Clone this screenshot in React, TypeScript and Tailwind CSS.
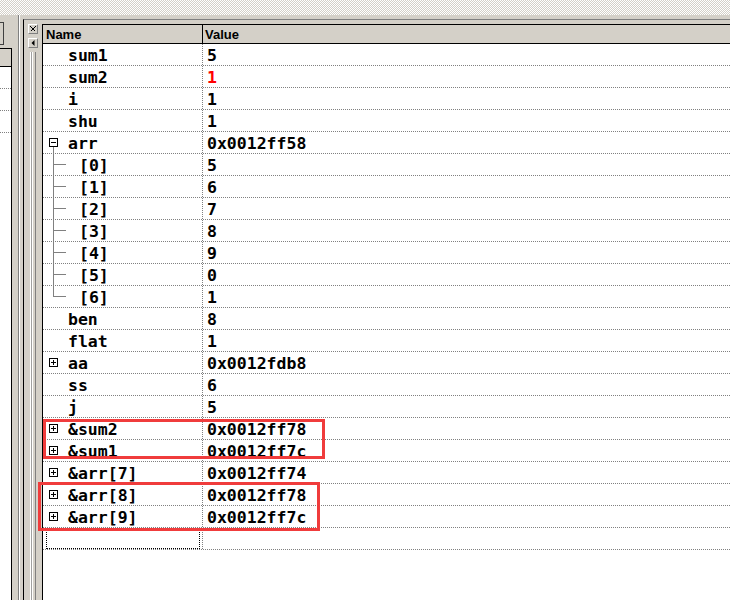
import React from "react";

type Kind = "none" | "plus" | "minus" | "child" | "last";
type Row = { name: string; value: string; kind: Kind; red?: boolean };

const rows: Row[] = [
  { name: "sum1", value: "5", kind: "none" },
  { name: "sum2", value: "1", kind: "none", red: true },
  { name: "i", value: "1", kind: "none" },
  { name: "shu", value: "1", kind: "none" },
  { name: "arr", value: "0x0012ff58", kind: "minus" },
  { name: "[0]", value: "5", kind: "child" },
  { name: "[1]", value: "6", kind: "child" },
  { name: "[2]", value: "7", kind: "child" },
  { name: "[3]", value: "8", kind: "child" },
  { name: "[4]", value: "9", kind: "child" },
  { name: "[5]", value: "0", kind: "child" },
  { name: "[6]", value: "1", kind: "last" },
  { name: "ben", value: "8", kind: "none" },
  { name: "flat", value: "1", kind: "none" },
  { name: "aa", value: "0x0012fdb8", kind: "plus" },
  { name: "ss", value: "6", kind: "none" },
  { name: "j", value: "5", kind: "none" },
  { name: "&sum2", value: "0x0012ff78", kind: "plus" },
  { name: "&sum1", value: "0x0012ff7c", kind: "plus" },
  { name: "&arr[7]", value: "0x0012ff74", kind: "plus" },
  { name: "&arr[8]", value: "0x0012ff78", kind: "plus" },
  { name: "&arr[9]", value: "0x0012ff7c", kind: "plus" },
];

const mono = "font-['DejaVu_Sans_Mono',monospace] font-bold text-[16.5px] leading-none text-black pt-[4px]";

function Lead({ kind }: { kind: Kind }) {
  return (
    <svg width="25" height="21" className="shrink-0 overflow-visible" shapeRendering="crispEdges">
      {(kind === "plus" || kind === "minus") && (
        <>
          <rect x="6.5" y="6.5" width="8" height="8" fill="#fff" stroke="#000" />
          <path d="M8 10.5h5" stroke="#000" />
          {kind === "plus" && <path d="M10.5 8v5" stroke="#000" />}
          {kind === "minus" && <path d="M10.5 15v7" stroke="#808080" />}
        </>
      )}
      {kind === "child" && (
        <path d="M10.5 0v22M10.5 10.5H23" stroke="#808080" fill="none" />
      )}
      {kind === "last" && (
        <path d="M10.5 0v10.5H23" stroke="#808080" fill="none" />
      )}
    </svg>
  );
}

function DataRow({ row }: { row: Row }) {
  const child = row.kind === "child" || row.kind === "last";
  return (
    <div className="flex h-[22px] shrink-0 border-b border-dotted border-[#808080]">
      <div className="flex w-[160px] shrink-0 items-center border-r border-dotted border-[#808080]">
        <Lead kind={row.kind} />
        <span className={`${mono} ${child ? "pl-[11px]" : ""} whitespace-pre`}>{row.name}</span>
      </div>
      <div className={`flex flex-1 items-center pl-[4px] ${mono} ${row.red ? "!text-[#ff0000]" : ""}`}>
        {row.value}
      </div>
    </div>
  );
}

function SmallButton({ children }: { children: React.ReactNode }) {
  return (
    <div className="flex h-[10px] w-[10px] items-center justify-center border-t border-l border-white border-r border-b border-r-[#808080] border-b-[#808080] bg-[#d4d0c8]">
      {children}
    </div>
  );
}

export default function App() {
  return (
    <div className="relative flex h-[600px] w-[730px] flex-col overflow-hidden bg-[#d4d0c8]">
      {/* hatched top strip */}
      <div className="h-[15px] shrink-0 [background-image:repeating-conic-gradient(#d4d0c8_0_25%,#ffffff_0_50%)] [background-size:2px_2px]" />

      <div className="flex min-h-0 flex-1">
        {/* left (variables) window edge */}
        <div className="flex w-[12px] shrink-0 flex-col">
          <div className="h-[33px] shrink-0 pt-[7px]">
            <div className="h-[23px] w-[4px] border-y border-r border-[#404040] bg-[#d4d0c8]" />
          </div>
          <div className="flex flex-1 flex-col border-t border-r border-black bg-white">
            <div className="h-[18px] shrink-0 border-b border-black bg-[#d4d0c8]" />
            <div className="h-[22px] shrink-0 border-b border-dotted border-[#808080]" />
            <div className="h-[22px] shrink-0 border-b border-dotted border-[#808080]" />
            <div className="h-[22px] shrink-0 border-b border-dotted border-[#808080]" />
          </div>
        </div>

        {/* splitter */}
        <div className="flex w-[11px] shrink-0">
          <div className="w-[6px]" />
          <div className="w-px bg-[#808080]" />
          <div className="w-px bg-white" />
        </div>

        {/* docked watch window */}
        <div className="mt-[4px] flex min-w-0 flex-1 border-t border-l border-t-[#808080] border-l-black">
          {/* dock bar */}
          <div className="flex w-[18px] shrink-0 flex-col pt-[4px] pl-[4px]">
            <SmallButton>
              <svg width="6" height="6" shapeRendering="crispEdges">
                <path d="M0.5 0.5l5 5M5.5 0.5l-5 5" stroke="#000" strokeWidth="1.4" />
              </svg>
            </SmallButton>
            <div className="mt-[4px]">
              <SmallButton>
                <svg width="6" height="8">
                  <path d="M4.5 1L1.5 4 4.5 7Z" fill="#000" />
                </svg>
              </SmallButton>
            </div>
            <div className="mt-[4px] flex flex-1 pl-[2px]">
              <div className="w-px bg-white" />
              <div className="w-px bg-[#a0a0a0]" />
              <div className="w-px bg-white" />
              <div className="w-[2px]" />
              <div className="w-px bg-[#808080]" />
            </div>
          </div>

          {/* watch list */}
          <div className="flex min-w-0 flex-1 flex-col pt-[4px]">
            <div className="flex flex-1 flex-col border-t border-l border-black bg-white">
              <div className="flex h-[19px] shrink-0 border-b border-black bg-[#d4d0c8] font-['Liberation_Sans',Arial,sans-serif] text-[13px] font-bold leading-none text-black">
                <div className="flex w-[160px] shrink-0 items-center border-r border-black pl-[3px]">Name</div>
                <div className="flex flex-1 items-center pl-[2px]">Value</div>
              </div>
              {rows.map((r, i) => (
                <DataRow key={i} row={r} />
              ))}
              <div className="flex h-[22px] shrink-0 border-b border-dotted border-[#808080]">
                <div className="w-[160px] shrink-0 border-r border-dotted border-[#808080] pt-[2px] pl-[3px]">
                  <div className="h-[19px] w-[154px] border border-dotted border-black" />
                </div>
                <div className="flex-1" />
              </div>
            </div>
          </div>
        </div>
      </div>

      {/* red annotation boxes */}
      <div className="absolute left-[43px] top-[419px] h-[40px] w-[282px] border-[3px] border-[#f03c3c]" />
      <div className="absolute left-[38px] top-[482px] h-[49px] w-[282px] border-[3px] border-[#f03c3c]" />
    </div>
  );
}
